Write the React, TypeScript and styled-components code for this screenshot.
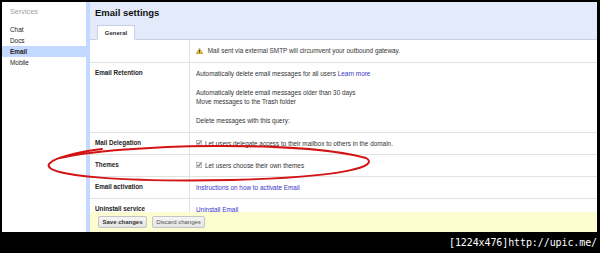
import React from "react";
import styled, { createGlobalStyle } from "styled-components";

const GlobalStyle = createGlobalStyle`
  body {
    margin: 0;
    background: #000;
    font-family: "Liberation Sans", Arial, sans-serif;
  }
`;

const Frame = styled.div`
  width: 600px;
  height: 253px;
  box-sizing: border-box;
  padding: 2px 3px 0 2px;
  background: #000;
  display: flex;
  flex-direction: column;
`;

const Screen = styled.div`
  position: relative;
  height: 230px;
  display: flex;
  background: #fff;
  overflow: hidden;
`;

const Caption = styled.div`
  flex: 1;
  display: flex;
  align-items: center;
  justify-content: flex-end;
  color: #fff;
  font: 10px "DejaVu Sans Mono", monospace;
  letter-spacing: -0.1px;
`;

// sidebar
const Sidebar = styled.div`
  width: 84px;
  padding-top: 6px;
  display: flex;
  flex-direction: column;
`;

const SideHead = styled.div`
  padding-left: 8px;
  color: #a0a0a0;
  font-size: 7.3px;
  line-height: 8px;
  margin-bottom: 7.5px;
`;

const SideItem = styled.div<{ $active?: boolean }>`
  height: 11px;
  line-height: 11px;
  padding-left: 8px;
  font-size: 6.4px;
  color: #222;
  font-weight: ${(p) => (p.$active ? "bold" : "normal")};
  background: ${(p) => (p.$active ? "#c3d9ff" : "transparent")};
`;

const Stripe = styled.div`
  width: 4px;
  background: #c3d9ff;
`;

// main
const Main = styled.div`
  flex: 1;
  display: flex;
  flex-direction: column;
  min-width: 0;
`;

const Header = styled.div`
  height: 38px;
  box-sizing: border-box;
  padding: 4px 0 0 5px;
  background: #e3eafa;
  border-bottom: 1px solid #c5d0e6;
  display: flex;
  flex-direction: column;
  align-items: flex-start;
`;

const Title = styled.div`
  font-size: 9.5px;
  font-weight: bold;
  line-height: 14px;
  color: #111;
`;

const Tab = styled.div`
  margin: 5px 0 -1px 2px;
  width: 38px;
  height: 15px;
  box-sizing: border-box;
  background: #fff;
  border: 1px solid #c5d0e6;
  border-bottom-color: #fff;
  display: flex;
  align-items: center;
  justify-content: center;
  font-size: 6px;
  font-weight: bold;
  color: #333;
`;

const Table = styled.div`
  flex: 1;
  overflow: hidden;
`;

const Row = styled.div<{ $h: number }>`
  display: grid;
  grid-template-columns: 100px 1fr;
  height: ${(p) => p.$h}px;
  box-sizing: border-box;
  border-bottom: 1px solid #e2e2e2;
`;

const Label = styled.div`
  padding: 6px 5px;
  border-right: 1px solid #e2e2e2;
  font-size: 6.3px;
  font-weight: bold;
  line-height: 8px;
  color: #222;
`;

const Value = styled.div<{ $center?: boolean }>`
  padding: ${(p) => (p.$center ? "0 6px" : "5.5px 6px")};
  display: flex;
  flex-direction: column;
  justify-content: ${(p) => (p.$center ? "center" : "flex-start")};
  font-size: 6.4px;
  line-height: 9.5px;
  color: #333;
`;

const Line = styled.div<{ $gap?: boolean }>`
  display: flex;
  align-items: center;
  gap: 3px;
  white-space: nowrap;
  margin-top: ${(p) => (p.$gap ? "9.5px" : "0")};
`;

const Link = styled.span`
  color: #3a35c8;
`;

const Footer = styled.div`
  height: 20px;
  padding-left: 8px;
  display: flex;
  align-items: center;
  gap: 5px;
  background: #fdfdd2;
`;

const Button = styled.div<{ $primary?: boolean; $w: number }>`
  width: ${(p) => p.$w}px;
  height: 12px;
  box-sizing: border-box;
  display: flex;
  align-items: center;
  justify-content: center;
  background: linear-gradient(#f6f6f6, #e4e4e4);
  border: 1px solid #c4c4c4;
  border-radius: 2px;
  font-size: 6px;
  font-weight: ${(p) => (p.$primary ? "bold" : "normal")};
  color: ${(p) => (p.$primary ? "#333" : "#555")};
`;

const Ellipse = styled.svg`
  position: absolute;
  left: 0;
  top: 0;
  pointer-events: none;
`;

const Warn = () => (
  <svg width="7" height="6" viewBox="0 0 7 6">
    <path d="M3.5 0.3 L6.8 5.7 L0.2 5.7 Z" fill="#e8c62a" stroke="#8a7414" strokeWidth="0.5" />
    <rect x="3.1" y="2" width="0.8" height="2" fill="#222" />
    <rect x="3.1" y="4.5" width="0.8" height="0.7" fill="#222" />
  </svg>
);

const Check = () => (
  <svg width="6" height="6" viewBox="0 0 6 6">
    <rect x="0.25" y="0.25" width="5.5" height="5.5" fill="#e8e8ee" stroke="#8f8f9a" strokeWidth="0.5" />
    <path d="M1.3 3 L2.5 4.3 L4.8 1.4" fill="none" stroke="#444" strokeWidth="0.9" />
  </svg>
);

export default function App() {
  return (
    <>
      <GlobalStyle />
      <Frame>
        <Screen>
          <Sidebar>
            <SideHead>Services</SideHead>
            <SideItem>Chat</SideItem>
            <SideItem>Docs</SideItem>
            <SideItem $active>Email</SideItem>
            <SideItem>Mobile</SideItem>
          </Sidebar>
          <Stripe />
          <Main>
            <Header>
              <Title>Email settings</Title>
              <Tab>General</Tab>
            </Header>
            <Table>
              <Row $h={23}>
                <Label />
                <Value $center>
                  <Line>
                    <Warn />
                    <span>&nbsp;Mail sent via external SMTP will circumvent your outbound gateway.</span>
                  </Line>
                </Value>
              </Row>
              <Row $h={70}>
                <Label>Email Retention</Label>
                <Value>
                  <Line>
                    <span>
                      Automatically delete email messages for all users <Link>Learn more</Link>
                    </span>
                  </Line>
                  <Line $gap>Automatically delete email messages older than 30 days</Line>
                  <Line>Move messages to the Trash folder</Line>
                  <Line $gap>Delete messages with this query:</Line>
                </Value>
              </Row>
              <Row $h={22}>
                <Label>Mail Delegation</Label>
                <Value>
                  <Line>
                    <Check />
                    <span>Let users delegate access to their mailbox to others in the domain.</span>
                  </Line>
                </Value>
              </Row>
              <Row $h={22}>
                <Label>Themes</Label>
                <Value>
                  <Line>
                    <Check />
                    <span>Let users choose their own themes</span>
                  </Line>
                </Value>
              </Row>
              <Row $h={22}>
                <Label>Email activation</Label>
                <Value>
                  <Line>
                    <Link>Instructions on how to activate Email</Link>
                  </Line>
                </Value>
              </Row>
              <Row $h={30}>
                <Label>Uninstall service</Label>
                <Value>
                  <Line>
                    <Link>Uninstall Email</Link>
                  </Line>
                </Value>
              </Row>
            </Table>
            <Footer>
              <Button $primary $w={49}>Save changes</Button>
              <Button $w={53}>Discard changes</Button>
            </Footer>
          </Main>
          {/* hand-drawn annotation */}
          <Ellipse width="595" height="230" viewBox="0 0 595 230">
            <path
              d="M58 156 C120 142, 300 138, 364 156 C378 164, 345 175, 230 178 C130 180, 40 175, 47 162 C51 156, 75 150, 100 147"
              fill="none"
              stroke="#d41414"
              strokeWidth="2"
              strokeLinecap="round"
            />
          </Ellipse>
        </Screen>
        <Caption>[1224x476]http://upic.me/</Caption>
      </Frame>
    </>
  );
}
